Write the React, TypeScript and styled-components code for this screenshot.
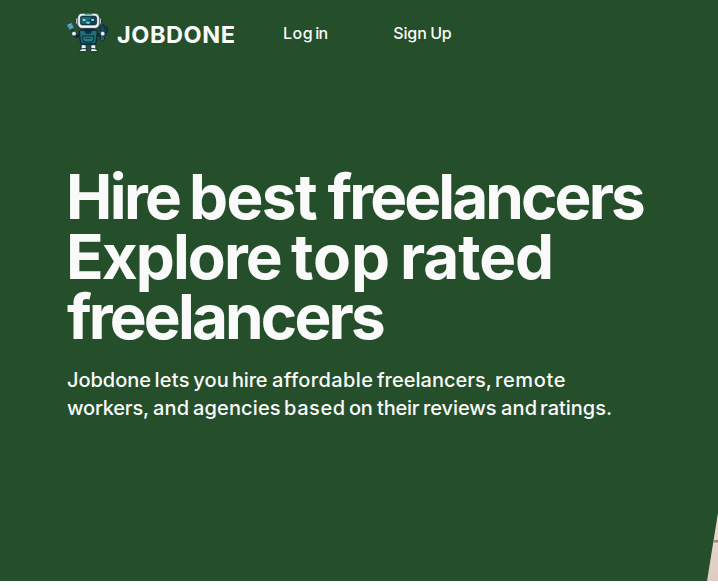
import React from "react";
import styled, { createGlobalStyle } from "styled-components";

const GlobalStyle = createGlobalStyle`
  body {
    margin: 0;
    background: #ffffff;
    overflow: hidden;
    font-family: Inter, "Liberation Sans", sans-serif;
  }
`;

const Page = styled.div`
  position: relative;
  box-sizing: border-box;
  width: 718px;
  height: 581px;
  overflow: hidden;
  background: #244f2a;
  color: #fafafa;
`;

const Header = styled.header`
  display: flex;
  height: 66px;
  padding-left: 66px;
`;

const Brand = styled.a`
  display: flex;
  width: 217px;
  color: inherit;
  text-decoration: none;
`;

const Robot = styled.svg`
  width: 44px;
  height: 42px;
  margin-top: 12px;
`;

const BrandName = styled.span`
  margin: 20px 0 0 7px;
  font-size: 23.5px;
  line-height: 30px;
  font-weight: 700;
  letter-spacing: 0.55px;
`;

const Nav = styled.nav`
  display: flex;
  gap: 65px;
  padding-top: 21px;
`;

const NavLink = styled.a`
  display: flex;
  font-size: 16px;
  line-height: 24px;
  font-weight: 500;
`;

const Hero = styled.main`
  padding: 101px 0 0 66px;
`;

const Title = styled.h1`
  margin: 0;
  font-size: 62px;
  line-height: 60px;
  font-weight: 700;
`;

const Subtitle = styled.p`
  margin: 19px 0 0;
  font-size: 20px;
  line-height: 28px;
  font-weight: 500;
`;

const Line = styled.span<{ $indent?: number }>`
  display: flex;
  padding-left: ${({ $indent = 0 }) => $indent}px;
  white-space: pre;
`;

const Word = styled.span<{ $width: number; $tracking: number }>`
  flex: none;
  width: ${({ $width }) => $width}px;
  letter-spacing: ${({ $tracking }) => $tracking}px;
`;

const Photo = styled.svg`
  position: absolute;
  right: 0;
  bottom: 0;
  width: 12px;
  height: 70px;
`;

/* text, distance to the next word, letter spacing */
type WordSpec = [string, number, number];

const titleLines: { indent: number; words: WordSpec[] }[] = [
  { indent: 0, words: [["Hire", 123, -2.62], ["best", 138.5, -1.58], ["freelancers", 330, -2.88]] },
  { indent: 0, words: [["Explore", 225, -1.93], ["top", 109, 0], ["rated", 160, -1.11]] },
  { indent: 1, words: [["freelancers", 330, -2.83]] },
];

const subtitleLines: WordSpec[][] = [
  [
    ["Jobdone", 87.5, -0.03], ["lets", 38.8, 0.28], ["you", 38.7, 0.12], ["hire", 40, -0.2],
    ["affordable", 105, 0.38], ["freelancers,", 118, 0.02], ["remote", 80, 0.63],
  ],
  [
    ["workers,", 86, -0.2], ["and", 40, 0.2], ["agencies", 91, 0.13], ["based", 65, 0.58],
    ["on", 28, -0.3], ["their", 46, -0.2], ["reviews", 78, -0.08], ["and", 39, 0.2], ["ratings.", 80, -0.02],
  ],
];

const navItems: WordSpec[][] = [
  [["Log", 32.2, 0.5], ["in", 13, -0.6]],
  [["Sign", 37, -0.09], ["Up", 22, -0.34]],
];

const renderWords = (words: WordSpec[]) =>
  words.map(([text, width, tracking], i) => (
    <Word key={i} $width={width} $tracking={tracking}>
      {i < words.length - 1 ? text + " " : text}
    </Word>
  ));

const RobotLogo = () => (
  <Robot viewBox="20 22 132 126" aria-label="Jobdone robot">
    {/* phone and raised hand */}
    <path d="M39 77 43 87 53 96 64 88" fill="none" stroke="#10283c" strokeWidth="9" />
    <path d="M21 60 37 53 46 70 29 77Z" fill="#4a929c" stroke="#1c4459" strokeWidth="2.5" />
    <path d="M27 62 36 58M31 68 39 65" stroke="#8bbcc4" strokeWidth="3" />
    <circle cx="44" cy="87" r="7" fill="#eaf1f2" stroke="#10283c" strokeWidth="2" />
    {/* right arm and tool */}
    <path d="M108 84 121 92 132 79" fill="none" stroke="#10283c" strokeWidth="9" />
    <path d="M123 66 132 60 137 68V79L128 84 121 76Z" fill="#164958" stroke="#10283c" strokeWidth="3" />
    <path d="M139 65 145 73 142 84 136 91" fill="none" stroke="#102d40" strokeWidth="5" />
    <path d="M123 94v11l7 5 6-7-3-11" fill="#226771" stroke="#10283c" strokeWidth="3" />
    <circle cx="130" cy="87" r="7" fill="#eaf1f2" stroke="#10283c" strokeWidth="2" />
    {/* legs */}
    <path d="M72 112v20M102 112v20" stroke="#10283c" strokeWidth="17" />
    <path d="M72 114v16M102 114v16" stroke="#176272" strokeWidth="10" />
    <path d="M67 122h12v12H67zM96 122h12v12H96z" fill="#edf3f4" />
    <path d="M60 141q0-9 9-9h12v9zM94 141v-9h11q10 0 10 9z" fill="#edf3f4" stroke="#10283c" strokeWidth="3" />
    {/* body */}
    <path d="M64 77h46q4 0 4 5l-3 27q-1 8-8 9H71q-7-1-8-9l-3-27q0-5 4-5Z" fill="#1d6f73" stroke="#10283c" strokeWidth="4" />
    <path d="M75 78h23l-4 9H79z" fill="#102d40" />
    <path d="M70 94h33v9q0 9-8 9H78q-8 0-8-9z" fill="#287d7f" stroke="#103c4c" strokeWidth="4" />
    <path d="M76 101h21" stroke="#103c4c" strokeWidth="3" />
    {/* head */}
    <path d="M71 68h32v9H71z" fill="#10283c" />
    <rect x="49" y="37" width="77" height="25" rx="8" fill="#d6e3e7" stroke="#10283c" strokeWidth="3" />
    <rect x="55" y="26" width="65" height="45" rx="13" fill="#f2f6f7" stroke="#10283c" strokeWidth="2" />
    <path d="M76 26h23v4H76z" fill="#267078" />
    <rect x="63" y="34" width="49" height="27" rx="6" fill="#153f50" stroke="#10283c" strokeWidth="2" />
    <path d="M67 37h32L80 57H67z" fill="#1e6671" />
    <path d="M70 43h8v5h-8zM96 43h8v5h-8z" fill="#79eee6" />
    <path d="M80 51h13q-1 7-6.500 7T80 51Z" fill="#63d7d5" />
  </Robot>
);

export default function App() {
  return (
    <>
      <GlobalStyle />
      <Page>
        <Header>
          <Brand>
            <RobotLogo />
            <BrandName>JOBDONE</BrandName>
          </Brand>
          <Nav>
            {navItems.map((words, i) => (
              <NavLink key={i}>{renderWords(words)}</NavLink>
            ))}
          </Nav>
        </Header>
        <Hero>
          <Title>
            {titleLines.map(({ indent, words }, i) => (
              <Line key={i} $indent={indent}>{renderWords(words)}</Line>
            ))}
          </Title>
          <Subtitle>
            {subtitleLines.map((words, i) => (
              <Line key={i} $indent={1}>{renderWords(words)}</Line>
            ))}
          </Subtitle>
        </Hero>
        <Photo viewBox="0 0 12 70">
          <defs>
            <linearGradient id="wall" x1="0" y1="0" x2="0" y2="1">
              <stop offset="0" stopColor="#eadbd3" />
              <stop offset="1" stopColor="#dfcbc2" />
            </linearGradient>
            <clipPath id="edge">
              <path d="M12 2V70H1Z" />
            </clipPath>
          </defs>
          <g clipPath="url(#edge)">
            <path d="M0 0h12v70H0z" fill="url(#wall)" />
            <path d="M0 29h12v2.500H0z" fill="#a58478" />
          </g>
        </Photo>
      </Page>
    </>
  );
}
